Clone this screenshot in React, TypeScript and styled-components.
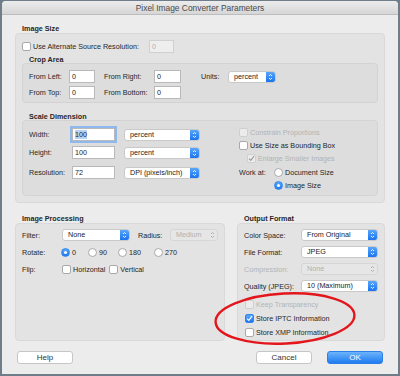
import styled, { createGlobalStyle } from "styled-components";

const Global = createGlobalStyle`
  html, body {
    margin: 0;
    padding: 0;
    background: #6f7c8a;
  }
  body {
    width: 400px;
    height: 376px;
    overflow: hidden;
    padding-top: 1px;
  }
`;

const Window = styled.div`
  position: relative;
  margin-left: 2px;
  width: 396px;
  height: 373px;
  background: #ececec;
  border-radius: 4px 4px 0 0;
  overflow: hidden;
  font-family: "Liberation Sans", Arial, sans-serif;
  font-size: 7.2px;
  color: #262626;
`;

const TitleBar = styled.div`
  height: 13px;
  background: linear-gradient(#ececec, #d6d6d6);
  border-bottom: 1px solid #bdbdbd;
  display: flex;
  align-items: center;
  justify-content: center;
  font-size: 8.4px;
  color: #4a4a4a;
`;

const Content = styled.div`
  padding: 0 13px;
`;

const SectionLabel = styled.div<{ $top?: number; $h?: number }>`
  font-weight: bold;
  height: ${(p) => p.$h ?? 9}px;
  line-height: 9px;
  padding-left: 7px;
  margin-top: ${(p) => p.$top ?? 9}px;
  color: #262626;
`;

const Panel = styled.div<{ $w?: number; $h?: number; $inner?: boolean; $pad?: string }>`
  background: ${(p) => (p.$inner ? "#dddddd" : "#e3e3e3")};
  border: 1px solid ${(p) => (p.$inner ? "#d3d3d3" : "#d9d9d9")};
  border-radius: 4px;
  box-sizing: border-box;
  width: ${(p) => (p.$w ? `${p.$w}px` : "auto")};
  height: ${(p) => (p.$h ? `${p.$h}px` : "auto")};
  padding: ${(p) => p.$pad ?? "6px 6px"};
`;

const Row = styled.div<{ $h?: number; $mt?: number; $indent?: number }>`
  display: flex;
  flex-shrink: 0;
  align-items: center;
  height: ${(p) => p.$h ?? 13}px;
  margin-top: ${(p) => p.$mt ?? 0}px;
  padding-left: ${(p) => p.$indent ?? 0}px;
`;

const Label = styled.span<{ $w?: number; $off?: boolean; $ml?: number }>`
  display: inline-block;
  flex: none;
  width: ${(p) => (p.$w ? `${p.$w}px` : "auto")};
  margin-left: ${(p) => p.$ml ?? 0}px;
  color: ${(p) => (p.$off ? "#b3b3b3" : "#262626")};
  white-space: nowrap;
`;

const Gap = styled.span<{ $w: number }>`
  flex: none;
  width: ${(p) => p.$w}px;
`;

const TextInput = styled.div<{ $w: number; $off?: boolean; $focus?: boolean }>`
  flex: none;
  box-sizing: border-box;
  width: ${(p) => p.$w}px;
  height: 13px;
  background: ${(p) => (p.$off ? "#eeeeee" : "#fff")};
  border: 1px solid ${(p) => (p.$off ? "#d0d0d0" : "#b9b9b9")};
  box-shadow: ${(p) => (p.$focus ? "0 0 0 2px #8fb8ee" : "none")};
  color: ${(p) => (p.$off ? "#b0b0b0" : "#222")};
  padding-left: 2px;
  line-height: 11px;
`;

const Selected = styled.span`
  background: #b5d3f7;
`;

const SelectBox = styled.div<{ $w: number; $off?: boolean }>`
  flex: none;
  box-sizing: border-box;
  width: ${(p) => p.$w}px;
  height: 12px;
  display: flex;
  align-items: stretch;
  background: ${(p) => (p.$off ? "#e6e6e6" : "#fff")};
  border: 1px solid ${(p) => (p.$off ? "#d6d6d6" : "#c9c9c9")};
  border-radius: 3px;
  overflow: hidden;
  color: ${(p) => (p.$off ? "#b0b0b0" : "#222")};
`;

const SelectText = styled.span`
  flex: 1;
  padding-left: 5px;
  line-height: 10px;
  white-space: nowrap;
`;

const Stepper = styled.span<{ $off?: boolean }>`
  flex: none;
  width: 9px;
  display: flex;
  align-items: center;
  justify-content: center;
  background: ${(p) => (p.$off ? "transparent" : "linear-gradient(#58a6fb, #1b74f0)")};
`;

const Box = styled.span<{ $on?: boolean; $off?: boolean; $round?: boolean }>`
  flex: none;
  box-sizing: border-box;
  width: 9px;
  height: 9px;
  border-radius: ${(p) => (p.$round ? "50%" : "2px")};
  border: 1px solid
    ${(p) => (p.$on && !p.$off ? "#2f86f0" : p.$off ? "#cfcfcf" : "#a9a9a9")};
  background: ${(p) =>
    p.$on && !p.$off ? "linear-gradient(#5aa9fb, #1f78f0)" : p.$off ? "#ececec" : "#fff"};
  display: flex;
  align-items: center;
  justify-content: center;
  margin-right: 2px;
`;

const Dot = styled.span`
  width: 3px;
  height: 3px;
  border-radius: 50%;
  background: #fff;
`;

const Split = styled.div`
  display: flex;
  height: 76px;
  box-sizing: border-box;
  border: 1px solid #d3d3d3;
  background: #dddddd;
  border-radius: 4px;
  padding: 7px 6px;
`;

const Col = styled.div<{ $w?: number; $gap?: number; $mt?: number; $pl?: number }>`
  display: flex;
  flex-direction: column;
  width: ${(p) => (p.$w ? `${p.$w}px` : "auto")};
  gap: ${(p) => p.$gap ?? 0}px;
  margin-top: ${(p) => p.$mt ?? 0}px;
  padding-left: ${(p) => p.$pl ?? 0}px;
`;

const Lower = styled.div`
  display: flex;
  gap: 12px;
  margin-top: 2px;
`;

const Buttons = styled.div`
  display: flex;
  align-items: center;
  margin-top: 10px;
  padding-left: 2px;
`;

const Button = styled.div<{ $primary?: boolean; $ml?: number }>`
  box-sizing: border-box;
  width: 56px;
  height: 13px;
  margin-left: ${(p) => p.$ml ?? 0}px;
  border-radius: 3px;
  display: flex;
  align-items: center;
  justify-content: center;
  font-size: 8px;
  background: ${(p) => (p.$primary ? "linear-gradient(#6cb3fa, #1f7cf1)" : "#fff")};
  border: 1px solid ${(p) => (p.$primary ? "#2a7fe8" : "#c6c6c6")};
  color: ${(p) => (p.$primary ? "#fff" : "#333")};
`;

const Annotation = styled.svg`
  position: absolute;
  left: 0;
  top: 0;
  pointer-events: none;
`;

function Arrows({ off }: { off?: boolean }) {
  const c = off ? "#a8a8a8" : "#fff";
  return (
    <svg width="5" height="8" viewBox="0 0 5 8">
      <path d="M1 3 L2.5 1.5 L4 3 M1 5 L2.5 6.5 L4 5" stroke={c} strokeWidth="0.9" fill="none" />
    </svg>
  );
}

function Select({ w, text, off }: { w: number; text: string; off?: boolean }) {
  return (
    <SelectBox $w={w} $off={off}>
      <SelectText>{text}</SelectText>
      <Stepper $off={off}>
        <Arrows off={off} />
      </Stepper>
    </SelectBox>
  );
}

function Check({ label, on, off, indent, mt }: { label: string; on?: boolean; off?: boolean; indent?: number; mt?: number }) {
  return (
    <Row $h={13} $indent={indent} $mt={mt}>
      <Box $on={on} $off={off}>
        {on && (
          <svg width="7" height="7" viewBox="0 0 7 7">
            <path d="M1 3.6 L2.8 5.4 L6 1.2" stroke={off ? "#9a9a9a" : "#fff"} strokeWidth="1.1" fill="none" />
          </svg>
        )}
      </Box>
      <Label $off={off}>{label}</Label>
    </Row>
  );
}

function Radio({ label, on }: { label: string; on?: boolean }) {
  return (
    <>
      <Box $round $on={on}>{on && <Dot />}</Box>
      <Label>{label}</Label>
    </>
  );
}

export default function App() {
  return (
    <>
      <Global />
      <Window>
        <TitleBar>Pixel Image Converter Parameters</TitleBar>
        <Content>
          <SectionLabel>Image Size</SectionLabel>
          <Panel $h={170}>
            <Row>
              <Box />
              <Label $w={116}>Use Alternate Source Resolution:</Label>
              <TextInput $w={25} $off>0</TextInput>
            </Row>
            <SectionLabel $top={2} $h={8}>Crop Area</SectionLabel>
            <Panel $inner $h={40}>
              <Row>
                <Label $w={40}>From Left:</Label>
                <TextInput $w={26}>0</TextInput>
                <Label $w={50} $ml={9}>From Right:</Label>
                <TextInput $w={27}>0</TextInput>
                <Label $w={27} $ml={20}>Units:</Label>
                <Select w={48} text="percent" />
              </Row>
              <Row $mt={3}>
                <Label $w={40}>From Top:</Label>
                <TextInput $w={26}>0</TextInput>
                <Label $w={50} $ml={9}>From Bottom:</Label>
                <TextInput $w={27}>0</TextInput>
              </Row>
            </Panel>
            <SectionLabel $top={9} $h={8}>Scale Dimension</SectionLabel>
            <Split>
              <Col $w={210}>
                <Row>
                  <Label $w={43}>Width:</Label>
                  <TextInput $w={43} $focus><Selected>100</Selected></TextInput>
                  <Gap $w={9} />
                  <Select w={76} text="percent" />
                </Row>
                <Row $mt={5}>
                  <Label $w={43}>Height:</Label>
                  <TextInput $w={43}>100</TextInput>
                  <Gap $w={9} />
                  <Select w={76} text="percent" />
                </Row>
                <Row $mt={7}>
                  <Label $w={43}>Resolution:</Label>
                  <TextInput $w={43}>72</TextInput>
                  <Gap $w={9} />
                  <Select w={76} text="DPI  (pixels/inch)" />
                </Row>
              </Col>
              <Col $mt={-2}>
                <Check label="Constrain Proportions" off />
                <Check label="Use Size as Bounding Box" />
                <Check label="Enlarge Smaller Images" on off indent={8} />
                <Row $mt={1}>
                  <Label $w={35}>Work at:</Label>
                  <Radio label="Document Size" />
                </Row>
                <Row>
                  <Label $w={35} />
                  <Radio label="Image Size" on />
                </Row>
              </Col>
            </Split>
          </Panel>

          <Lower>
            <Col $w={210}>
              <SectionLabel>Image Processing</SectionLabel>
              <Panel $h={118} $pad="5px 6px">
                <Row $h={12}>
                  <Label $w={40}>Filter:</Label>
                  <Select w={68} text="None" />
                  <Label $w={32} $ml={8}>Radius:</Label>
                  <Select w={48} text="Medium" off />
                </Row>
                <Row $mt={5}>
                  <Label $w={39}>Rotate:</Label>
                  <Radio label="0" on />
                  <Gap $w={12} />
                  <Radio label="90" />
                  <Gap $w={11} />
                  <Radio label="180" />
                  <Gap $w={13} />
                  <Radio label="270" />
                </Row>
                <Row $mt={4}>
                  <Label $w={40}>Flip:</Label>
                  <Box />
                  <Label>Horizontal</Label>
                  <Gap $w={4} />
                  <Box />
                  <Label>Vertical</Label>
                </Row>
              </Panel>
            </Col>
            <Col $w={148}>
              <SectionLabel>Output Format</SectionLabel>
              <Panel $h={118} $pad="5px 6px">
                <Row $h={12}>
                  <Label $w={57}>Color Space:</Label>
                  <Select w={77} text="From Original" />
                </Row>
                <Row $h={12} $mt={5}>
                  <Label $w={57}>File Format:</Label>
                  <Select w={77} text="JPEG" />
                </Row>
                <Row $h={12} $mt={5}>
                  <Label $w={57} $off>Compression:</Label>
                  <Select w={77} text="None" off />
                </Row>
                <Row $h={12} $mt={5}>
                  <Label $w={57}>Quality (JPEG):</Label>
                  <Select w={77} text="10 (Maximum)" />
                </Row>
                <Col $mt={6} $pl={1} $gap={1}>
                  <Check label="Keep Transparency" off />
                  <Check label="Store IPTC Information" on />
                  <Check label="Store XMP Information" />
                </Col>
              </Panel>
            </Col>
          </Lower>

          <Buttons>
            <Button>Help</Button>
            <Button $ml={183}>Cancel</Button>
            <Button $ml={15} $primary>OK</Button>
          </Buttons>
        </Content>
        <Annotation width="396" height="373" viewBox="0 0 396 373">
          <ellipse
            cx="283"
            cy="317.5"
            rx="69.5"
            ry="25"
            transform="rotate(-3 283 317.5)"
            fill="none"
            stroke="#e3161c"
            strokeWidth="2.4"
          />
        </Annotation>
      </Window>
    </>
  );
}
